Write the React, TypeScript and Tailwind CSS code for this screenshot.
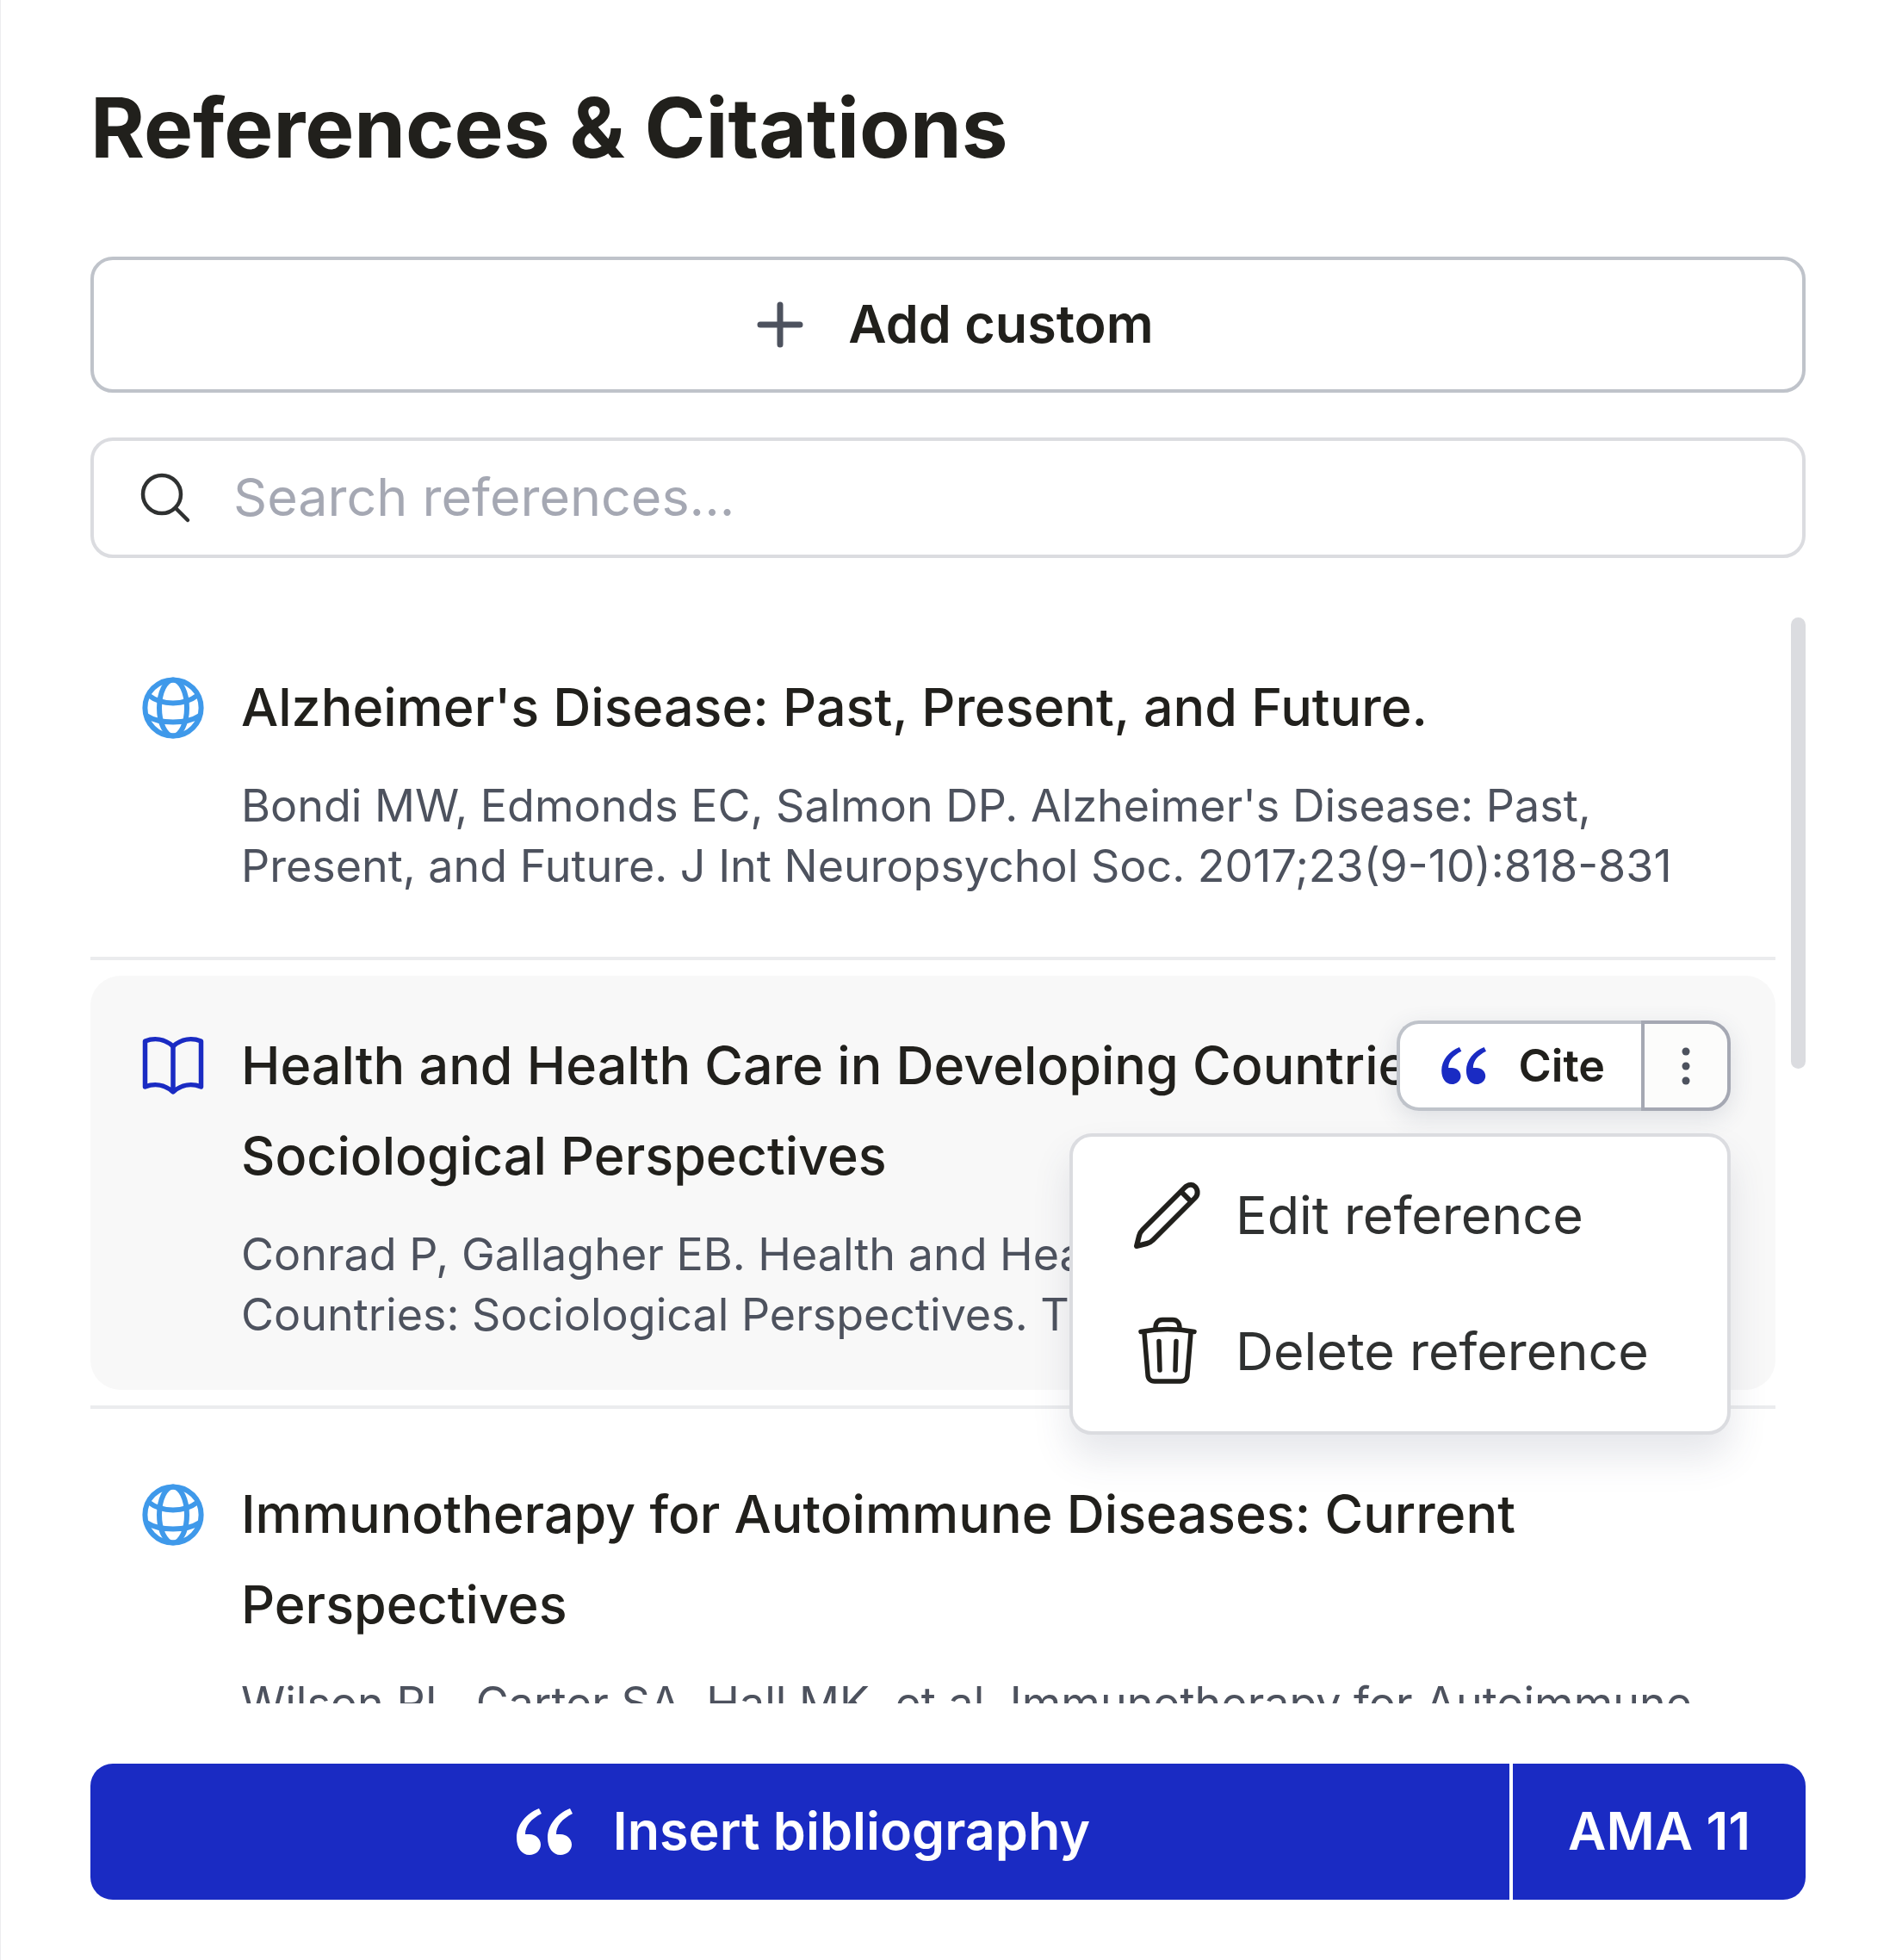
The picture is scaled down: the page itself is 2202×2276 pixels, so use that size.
import { useState } from "react";

interface IReference {
  id: number;
  kind: "web" | "book";
  title: string;
  citation: string;
}

const references: IReference[] = [
  {
    id: 1,
    kind: "web",
    title: "Alzheimer's Disease: Past, Present, and Future.",
    citation:
      "Bondi MW, Edmonds EC, Salmon DP. Alzheimer's Disease: Past, Present, and Future. J Int Neuropsychol Soc. 2017;23(9-10):818-831",
  },
  {
    id: 2,
    kind: "book",
    title: "Health and Health Care in Developing Countries: Sociological Perspectives",
    citation:
      "Conrad P, Gallagher EB. Health and Health Care in Developing Countries: Sociological Perspectives. Third World Q",
  },
  {
    id: 3,
    kind: "web",
    title: "Immunotherapy for Autoimmune Diseases: Current Perspectives",
    citation:
      "Wilson RL, Carter SA, Hall MK, et al. Immunotherapy for Autoimmune Diseases",
  },
];

function GlobeIcon() {
  return (
    <svg viewBox="0 0 88 88" className="size-[88px] text-[#3f99ea]" fill="none" stroke="currentColor" strokeWidth="6" aria-hidden="true">
      <circle cx="44" cy="44" r="32.6" />
      <ellipse cx="44" cy="44" rx="16" ry="32.6" />
      <path d="M15 29C24 36 34 38.5 44 38.5S64 36 73 29" />
      <path d="M13 53C22 59 33 60.5 44 60.5S66 59 75 53" />
    </svg>
  );
}

function BookIcon() {
  return (
    <svg viewBox="0 0 88 88" className="size-[88px] text-[#1a2bc3]" fill="none" stroke="currentColor" strokeWidth="5.5" strokeLinejoin="round" aria-hidden="true">
      <path d="M44 21C34 12 22 11 11.5 15V68C22 64 34 65 44 74C54 65 66 64 76.5 68V15C66 11 54 12 44 21Z" />
      <path d="M44 21V74" />
    </svg>
  );
}

function QuoteIcon({ className }: { className: string }) {
  return (
    <svg viewBox="0 0 66 54" className={className} fill="currentColor" aria-hidden="true">
      <path d="M26 0L29 6C17 12 10 20 10 30H15C22 30 28 35 28 42C28 49 22 54 15 54C6 54 0 46 0 34C0 19 11 6 26 0Z" />
      <path d="M62 0L65 6C53 12 46 20 46 30H51C58 30 64 35 64 42C64 49 58 54 51 54C42 54 36 46 36 34C36 19 47 6 62 0Z" />
    </svg>
  );
}

function PencilIcon() {
  return (
    <svg viewBox="0 0 88 88" className="size-[88px] text-[#21201c]" fill="none" stroke="currentColor" strokeWidth="6" strokeLinecap="round" strokeLinejoin="round" aria-hidden="true">
      <path d="M8 79L11 67Q12 63 15 60L64 11C68 7 73 7 76 10S80 19 76 23L27 72Q24 75 20 76Z" />
      <path d="M60 16L70 26" />
    </svg>
  );
}

function TrashIcon() {
  return (
    <svg viewBox="0 0 88 88" className="size-[88px] text-[#21201c]" fill="none" stroke="currentColor" strokeWidth="5.5" strokeLinecap="round" strokeLinejoin="round" aria-hidden="true">
      <path d="M13 20.5C33 16.5 55 16.5 75 20.5" />
      <path d="M30 16C30 10 33 6.5 38 6.5H50C55 6.5 58 10 58 16" />
      <path d="M17 22L21 70C21 75 24 78 29 78H59C64 78 67 75 67 70L71 22" />
      <path d="M34 31.5L35 65M54 31.5L53 65" />
    </svg>
  );
}

function ReferenceActions() {
  const [open, setOpen] = useState(true);

  return (
    <div className="absolute top-[52px] right-[52px]">
      <div className="flex h-[105px] rounded-[26px] shadow-[0_8px_28px_rgba(60,70,100,0.14)]">
        <button type="button" className="flex items-center gap-9 rounded-l-[26px] border-4 border-r-0 border-[#bfc3ca] bg-white pr-[42px] pl-12 text-[52px] font-semibold text-[#21201c]">
          <QuoteIcon className="h-[43px] w-[53px] text-[#1a2bc3]" />
          Cite
        </button>
        <button
          type="button"
          aria-label="More actions"
          aria-expanded={open}
          onClick={() => setOpen(!open)}
          className="flex w-[104px] items-center justify-center rounded-r-[26px] border-4 border-[#a5a8b3] bg-[#fcfcfb]"
        >
          <svg viewBox="0 0 10 44" className="h-[44px] w-[10px] text-[#4d525e]" fill="currentColor" aria-hidden="true">
            <circle cx="5" cy="5" r="4.5" />
            <circle cx="5" cy="22" r="4.5" />
            <circle cx="5" cy="39" r="4.5" />
          </svg>
        </button>
      </div>

      {/* Dropdown menu */}
      {open && (
        <div role="menu" className="absolute top-full right-0 mt-[26px] w-[768px] rounded-[26px] border-4 border-[#dbdce0] bg-white py-[13px] text-[61px] text-[#2f3131] shadow-[0_26px_44px_rgba(60,70,100,0.13)]">
          <button type="button" role="menuitem" className="flex h-[158px] w-full items-center gap-[35px] pl-[66px]">
            <PencilIcon />
            Edit reference
          </button>
          <button type="button" role="menuitem" className="flex h-[158px] w-full items-center gap-[35px] pl-[66px]">
            <TrashIcon />
            Delete reference
          </button>
        </div>
      )}
    </div>
  );
}

function ReferenceItem({ reference, active }: { reference: IReference; active: boolean }) {
  return (
    <article className={`relative flex gap-[35px] rounded-[35px] p-[52px] ${active ? "z-10 bg-[#f8f8f8]" : ""}`}>
      <div className="flex h-[105px] shrink-0 items-center">
        {reference.kind === "web" ? <GlobeIcon /> : <BookIcon />}
      </div>
      <div className="flex min-w-0 flex-col gap-[27px]">
        <h2 className="text-[61px] leading-[105px] font-medium text-[#21201c]">{reference.title}</h2>
        <p className="line-clamp-2 text-[52px] leading-[70px] text-[#4d525e]">{reference.citation}</p>
      </div>
      {active && <ReferenceActions />}
    </article>
  );
}

export default function App() {
  const [search, setSearch] = useState("");
  const activeId = 2;

  const visible = references.filter((r) => r.title.toLowerCase().includes(search.toLowerCase()));

  return (
    <main className="min-h-screen border-l border-[#ededef] bg-white pt-[87px] pr-[105px] pb-[70px] pl-[104px] font-['Inter',sans-serif]">
      <h1 className="text-[96px] leading-[122px] font-bold text-[#21201c]">References &amp; Citations</h1>

      {/* Add custom */}
      <button type="button" className="mt-[89px] flex h-[158px] w-full items-center justify-center gap-[35px] rounded-[26px] border-4 border-[#bfc3ca] text-[61px] font-semibold text-[#21201c]">
        <svg viewBox="0 0 88 88" className="size-[88px] text-[#4d525e]" fill="none" stroke="currentColor" strokeWidth="7" strokeLinecap="round" aria-hidden="true">
          <path d="M44 21V67M21 44H67" />
        </svg>
        Add custom
      </button>

      {/* Search */}
      <label className="mt-[52px] flex h-[140px] items-center gap-[44px] rounded-[26px] border-4 border-[#dbdce0] px-12">
        <svg viewBox="0 0 70 70" className="size-[70px] shrink-0 text-[#2f3131]" fill="none" stroke="currentColor" strokeWidth="4.5" strokeLinecap="round" aria-hidden="true">
          <circle cx="31" cy="31" r="22" />
          <path d="M47 47L61 61" />
        </svg>
        <input
          type="text"
          aria-label="Search references"
          placeholder="Search references..."
          value={search}
          onChange={(e) => setSearch(e.target.value)}
          className="min-w-0 flex-1 text-[61px] text-[#21201c] outline-none placeholder:text-[#a5a8b3]"
        />
      </label>

      {/* References list */}
      <div className="mt-[69px] flex h-[1261px] gap-[18px] overflow-hidden">
        <div className="min-w-0 flex-1">
          {visible.map((reference, i) => (
            <div key={reference.id}>
              {i > 0 && <hr className="my-[18px] border-t-4 border-[#ebecee]" />}
              <ReferenceItem reference={reference} active={reference.id === activeId} />
            </div>
          ))}
        </div>
        <div className="h-[524px] w-[17px] rounded-full bg-[#dbdce0]" />
      </div>

      {/* Bibliography */}
      <div className="mt-[70px] flex h-[158px] gap-1 overflow-hidden rounded-[26px] text-[61px] font-semibold text-white">
        <button type="button" className="flex flex-1 items-center justify-center gap-[46px] bg-[#1a2bc3] pl-2">
          <QuoteIcon className="h-[54px] w-[66px]" />
          Insert bibliography
        </button>
        <button type="button" className="bg-[#1a2bc3] px-[64px]">AMA 11</button>
      </div>
    </main>
  );
}
